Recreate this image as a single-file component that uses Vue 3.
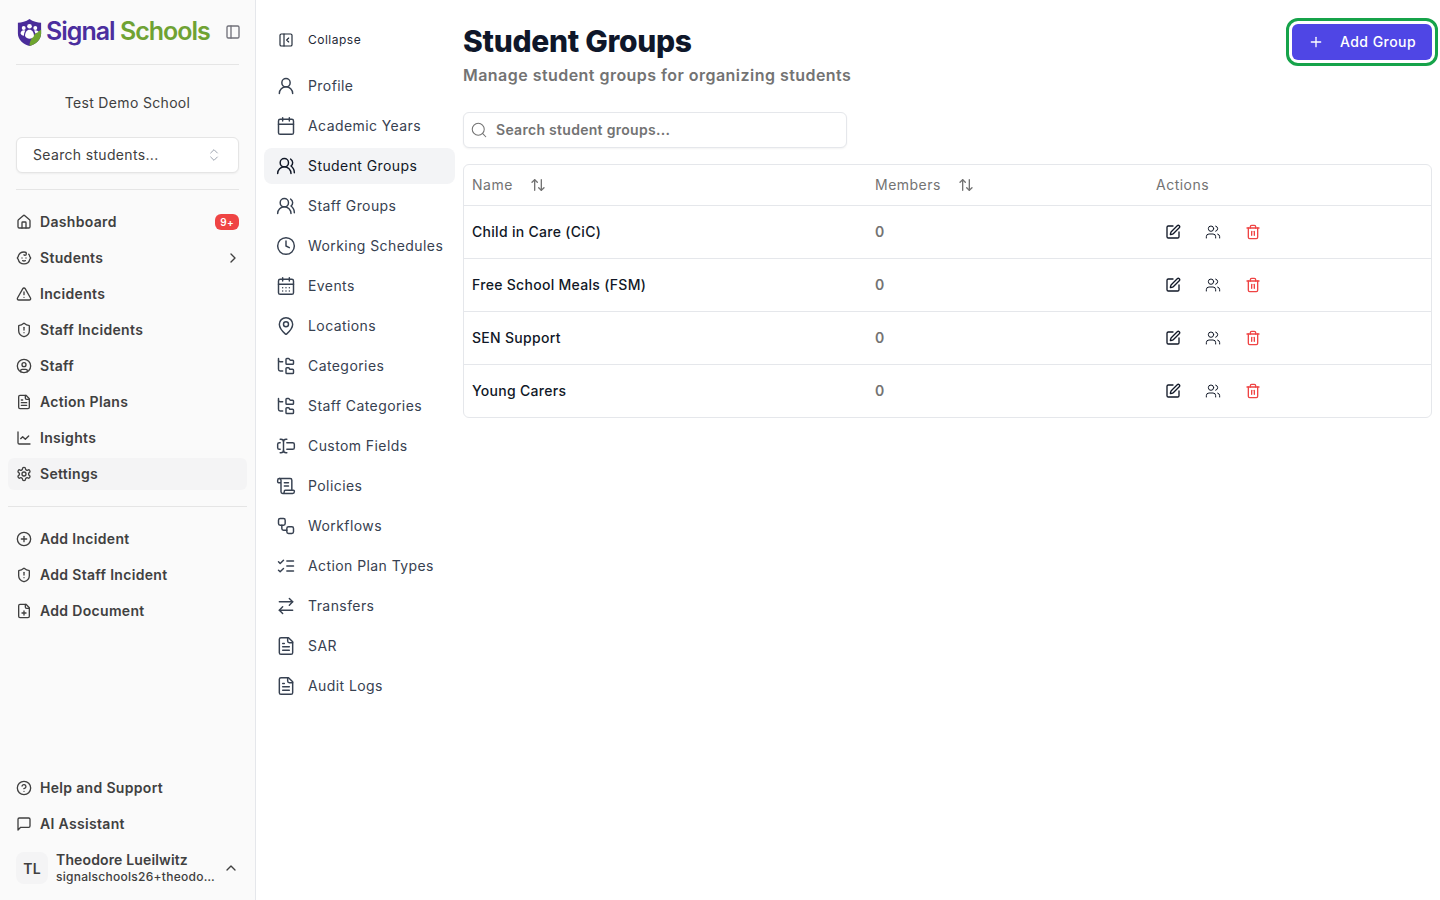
<script setup>
const p = (...ds) => ds.map(d => `<path d="${d}"/>`).join('')
const c = (cx, cy, r) => `<circle cx="${cx}" cy="${cy}" r="${r}"/>`
const r = (x, y, w, h, rx) => `<rect x="${x}" y="${y}" width="${w}" height="${h}" rx="${rx}"/>`

const shield = 'M20 13c0 5-3.5 7.5-7.66 8.95a1 1 0 0 1-.67-.01C7.5 20.5 4 18 4 13V6a1 1 0 0 1 1-1c2 0 4.5-1.2 6.24-2.72a1.17 1.17 0 0 1 1.52 0C14.51 3.81 17 5 19 5a1 1 0 0 1 1 1z'
const file = 'M15 2H6a2 2 0 0 0-2 2v16a2 2 0 0 0 2 2h12a2 2 0 0 0 2-2V7Z'
const fold = 'M14 2v4a2 2 0 0 0 2 2h4'

const icons = {
  home: p('M15 21v-8a1 1 0 0 0-1-1h-4a1 1 0 0 0-1 1v8', 'M3 10a2 2 0 0 1 .709-1.528l7-5.999a2 2 0 0 1 2.582 0l7 5.999A2 2 0 0 1 21 10v9a2 2 0 0 1-2 2H5a2 2 0 0 1-2-2z'),
  baby: p('M9 12h.01', 'M15 12h.01', 'M10 16c.5.3 1.2.5 2 .5s1.5-.2 2-.5', 'M19 6.3a9 9 0 0 1 1.8 3.9 2 2 0 0 1 0 3.6 9 9 0 0 1-17.6 0 2 2 0 0 1 0-3.6A9 9 0 0 1 12 3c2 0 3.5 1.1 3.5 2.5s-.9 2.5-2 2.5c-.8 0-1.5-.4-1.5-1'),
  alert: p('m21.73 18-8-14a2 2 0 0 0-3.48 0l-8 14A2 2 0 0 0 4 21h16a2 2 0 0 0 1.73-3', 'M12 9v4', 'M12 17h.01'),
  shield: p(shield, 'M12 8v4', 'M12 16h.01'),
  userCircle: c(12, 12, 10) + c(12, 10, 3) + p('M7 20.662V19a2 2 0 0 1 2-2h6a2 2 0 0 1 2 2v1.662'),
  file: p(file, fold, 'M10 9H8', 'M16 13H8', 'M16 17H8'),
  chart: p('M3 3v16a2 2 0 0 0 2 2h16', 'm19 9-5 5-4-4-3 3'),
  settings: p('M12.22 2h-.44a2 2 0 0 0-2 2v.18a2 2 0 0 1-1 1.73l-.43.25a2 2 0 0 1-2 0l-.15-.08a2 2 0 0 0-2.73.73l-.22.38a2 2 0 0 0 .73 2.73l.15.1a2 2 0 0 1 1 1.72v.51a2 2 0 0 1-1 1.74l-.15.09a2 2 0 0 0-.73 2.73l.22.38a2 2 0 0 0 2.73.73l.15-.08a2 2 0 0 1 2 0l.43.25a2 2 0 0 1 1 1.73V20a2 2 0 0 0 2 2h.44a2 2 0 0 0 2-2v-.18a2 2 0 0 1 1-1.73l.43-.25a2 2 0 0 1 2 0l.15.08a2 2 0 0 0 2.73-.73l.22-.39a2 2 0 0 0-.73-2.73l-.15-.08a2 2 0 0 1-1-1.74v-.5a2 2 0 0 1 1-1.74l.15-.09a2 2 0 0 0 .73-2.73l-.22-.38a2 2 0 0 0-2.73-.73l-.15.08a2 2 0 0 1-2 0l-.43-.25a2 2 0 0 1-1-1.73V4a2 2 0 0 0-2-2z') + c(12, 12, 3),
  circlePlus: c(12, 12, 10) + p('M8 12h8', 'M12 8v8'),
  filePlus: p(file, fold, 'M9 15h6', 'M12 18v-6'),
  help: c(12, 12, 10) + p('M9.09 9a3 3 0 0 1 5.83 1c0 2-3 3-3 3', 'M12 17h.01'),
  message: p('M21 15a2 2 0 0 1-2 2H7l-4 4V5a2 2 0 0 1 2-2h14a2 2 0 0 1 2 2z'),
  panel: r(3, 3, 18, 18, 2) + p('M9 3v18'),
  panelClose: r(3, 3, 18, 18, 2) + p('M9 3v18', 'm16 15-3-3 3-3'),
  updown: p('m7 15 5 5 5-5', 'm7 9 5-5 5 5'),
  chevronRight: p('m9 18 6-6-6-6'),
  chevronUp: p('m18 15-6-6-6 6'),
  user: c(12, 8, 5) + p('M20 21a8 8 0 0 0-16 0'),
  calendar: p('M8 2v4', 'M16 2v4', 'M3 10h18') + r(3, 4, 18, 18, 2),
  usersRound: p('M18 21a8 8 0 0 0-16 0', 'M22 20c0-3.37-2-6.5-4-8a5 5 0 0 0-.45-8.3') + c(10, 8, 5),
  clock: c(12, 12, 10) + p('M12 6v6l4 2'),
  calendarDays: p('M8 2v4', 'M16 2v4', 'M3 10h18', 'M8 14h.01', 'M12 14h.01', 'M16 14h.01', 'M8 18h.01', 'M12 18h.01', 'M16 18h.01') + r(3, 4, 18, 18, 2),
  pin: p('M20 10c0 4.993-5.539 10.193-7.399 11.799a1 1 0 0 1-1.202 0C9.539 20.193 4 14.993 4 10a8 8 0 0 1 16 0') + c(12, 10, 3),
  tree: p('M20 10a1 1 0 0 0 1-1V6a1 1 0 0 0-1-1h-2.5a1 1 0 0 1-.8-.4l-.9-1.2A1 1 0 0 0 15 3h-2a1 1 0 0 0-1 1v5a1 1 0 0 0 1 1Z', 'M20 21a1 1 0 0 0 1-1v-3a1 1 0 0 0-1-1h-2.9a1 1 0 0 1-.88-.55l-.42-.85a1 1 0 0 0-.92-.6H13a1 1 0 0 0-1 1v5a1 1 0 0 0 1 1Z', 'M3 5a2 2 0 0 0 2 2h3', 'M3 3v13a2 2 0 0 0 2 2h3'),
  cursorInput: p('M5 4h1a3 3 0 0 1 3 3 3 3 0 0 1 3-3h1', 'M13 20h-1a3 3 0 0 1-3-3 3 3 0 0 1-3 3H5', 'M5 16H4a2 2 0 0 1-2-2v-4a2 2 0 0 1 2-2h1', 'M13 8h7a2 2 0 0 1 2 2v4a2 2 0 0 1-2 2h-7', 'M9 7v10'),
  scroll: p('M15 12h-5', 'M15 8h-5', 'M19 17V5a2 2 0 0 0-2-2H4', 'M8 21h12a2 2 0 0 0 2-2v-1a1 1 0 0 0-1-1H11a1 1 0 0 0-1 1v1a2 2 0 1 1-4 0V5a2 2 0 1 0-4 0v2a1 1 0 0 0 1 1h3'),
  workflow: r(3, 3, 8, 8, 2) + r(13, 13, 8, 8, 2) + p('M7 11v4a2 2 0 0 0 2 2h4'),
  checks: p('m3 17 2 2 4-4', 'm3 7 2 2 4-4', 'M13 6h8', 'M13 12h8', 'M13 18h8'),
  transfer: p('m16 3 4 4-4 4', 'M20 7H4', 'm8 21-4-4 4-4', 'M4 17h16'),
  sort: p('m21 16-4 4-4-4', 'M17 20V4', 'm3 8 4-4 4 4', 'M7 4v16'),
  search: p('m21 21-4.34-4.34') + c(11, 11, 8),
  edit: p('M12 3H5a2 2 0 0 0-2 2v14a2 2 0 0 0 2 2h14a2 2 0 0 0 2-2v-7', 'M18.375 2.625a1 1 0 0 1 3 3l-9 9a2 2 0 0 1-.88.51l-2.87.84a.5.5 0 0 1-.62-.62l.84-2.87a2 2 0 0 1 .51-.88z'),
  users: p('M16 21v-2a4 4 0 0 0-4-4H6a4 4 0 0 0-4 4v2', 'M16 3.128a4 4 0 0 1 0 7.744', 'M22 21v-2a4 4 0 0 0-3-3.87') + c(9, 7, 4),
  trash: p('M3 6h18', 'M19 6v14c0 1-1 2-2 2H7c-1 0-2-1-2-2V6', 'M8 6V4c0-1 1-2 2-2h4c1 0 2 1 2 2v2', 'M10 11v6', 'M14 11v6'),
  plus: p('M5 12h14', 'M12 5v14'),
}

const mainNav = [
  { label: 'Dashboard', icon: 'home', badge: '9+' },
  { label: 'Students', icon: 'baby', arrow: true },
  { label: 'Incidents', icon: 'alert' },
  { label: 'Staff Incidents', icon: 'shield' },
  { label: 'Staff', icon: 'userCircle' },
  { label: 'Action Plans', icon: 'file' },
  { label: 'Insights', icon: 'chart' },
  { label: 'Settings', icon: 'settings', active: true },
]
const quickNav = [
  { label: 'Add Incident', icon: 'circlePlus' },
  { label: 'Add Staff Incident', icon: 'shield' },
  { label: 'Add Document', icon: 'filePlus' },
]
const footNav = [
  { label: 'Help and Support', icon: 'help' },
  { label: 'AI Assistant', icon: 'message' },
]
const settingsNav = [
  { label: 'Profile', icon: 'user' },
  { label: 'Academic Years', icon: 'calendar' },
  { label: 'Student Groups', icon: 'usersRound', active: true },
  { label: 'Staff Groups', icon: 'usersRound' },
  { label: 'Working Schedules', icon: 'clock' },
  { label: 'Events', icon: 'calendarDays' },
  { label: 'Locations', icon: 'pin' },
  { label: 'Categories', icon: 'tree' },
  { label: 'Staff Categories', icon: 'tree' },
  { label: 'Custom Fields', icon: 'cursorInput' },
  { label: 'Policies', icon: 'scroll' },
  { label: 'Workflows', icon: 'workflow' },
  { label: 'Action Plan Types', icon: 'checks' },
  { label: 'Transfers', icon: 'transfer' },
  { label: 'SAR', icon: 'file' },
  { label: 'Audit Logs', icon: 'file' },
]
const groups = [
  { name: 'Child in Care (CiC)', members: 0 },
  { name: 'Free School Meals (FSM)', members: 0 },
  { name: 'SEN Support', members: 0 },
  { name: 'Young Carers', members: 0 },
]
</script>

<template>
  <div class="app">
    <aside class="sidebar">
      <div class="brand">
        <svg class="logo" viewBox="0 0 28 32">
          <path d="M14 1 C18 4 23 5 27 5 L27 17 C27 24 21 29 14 31 C7 29 1 24 1 17 L1 5 C5 5 10 4 14 1Z" fill="#4a2c9a" />
          <path d="M27 13 L27 17 C27 24 21 29 14 31 C14 24 19 17 27 13Z" fill="#6fa52f" />
          <circle cx="14" cy="9" r="2.6" fill="#fff" />
          <circle cx="7.5" cy="11" r="2.2" fill="#fff" />
          <circle cx="20.5" cy="11" r="2.2" fill="#fff" />
          <path d="M9 20c0-4 2-7 5-7s5 3 5 7c-1 2-3 3-5 3s-4-1-5-3Z" fill="#fff" />
          <path d="M4 17c0-2 1.500-3.500 3.500-3.500 .7 0 1.300 .2 1.800 .5-1 1.500-1.500 3.500-1.500 5.500-1.500 0-3-.8-3.800-2.500Z" fill="#fff" />
          <path d="M24 15.500c-.5-1.200-1.500-2-3-2-.7 0-1.300 .2-1.800 .5 .7 1 1.100 2 1.300 3.200Z" fill="#fff" />
        </svg>
        <span class="brand-name"><span class="purple">Signal</span> <span class="green">Schools</span></span>
        <svg class="icon panel-btn" viewBox="0 0 24 24" v-html="icons.panel"></svg>
      </div>
      <div class="school">Test Demo School</div>
      <button class="student-search">
        <span class="lift">Search students...</span>
        <svg class="icon updown" viewBox="0 0 24 24" v-html="icons.updown"></svg>
      </button>
      <div class="rule inset"></div>

      <nav class="nav">
        <a v-for="item in mainNav" :key="item.label" class="nav-item" :class="{ active: item.active }">
          <svg class="icon" viewBox="0 0 24 24" v-html="icons[item.icon]"></svg>
          <span class="nav-label lift">{{ item.label }}</span>
          <span v-if="item.badge" class="badge">{{ item.badge }}</span>
          <svg v-if="item.arrow" class="icon arrow" viewBox="0 0 24 24" v-html="icons.chevronRight"></svg>
        </a>
      </nav>
      <div class="rule"></div>
      <nav class="nav quick">
        <a v-for="item in quickNav" :key="item.label" class="nav-item">
          <svg class="icon" viewBox="0 0 24 24" v-html="icons[item.icon]"></svg>
          <span class="nav-label lift">{{ item.label }}</span>
        </a>
      </nav>

      <nav class="nav foot">
        <a v-for="item in footNav" :key="item.label" class="nav-item">
          <svg class="icon" viewBox="0 0 24 24" v-html="icons[item.icon]"></svg>
          <span class="nav-label lift">{{ item.label }}</span>
        </a>
      </nav>
      <div class="user">
        <div class="avatar">TL</div>
        <div class="user-text">
          <div class="user-name">Theodore Lueilwitz</div>
          <div class="user-mail">signalschools26+theodo…</div>
        </div>
        <svg class="icon user-chevron" viewBox="0 0 24 24" v-html="icons.chevronUp"></svg>
      </div>
    </aside>

    <div class="subnav">
      <a class="collapse">
        <svg class="icon" viewBox="0 0 24 24" v-html="icons.panelClose"></svg>
        <span class="lift">Collapse</span>
      </a>
      <a v-for="item in settingsNav" :key="item.label" class="sub-item" :class="{ active: item.active }">
        <svg class="icon" viewBox="0 0 24 24" v-html="icons[item.icon]"></svg>
        <span class="lift">{{ item.label }}</span>
      </a>
    </div>

    <main class="main">
      <header class="head">
        <div>
          <h1>Student Groups</h1>
          <p>Manage student groups for organizing students</p>
        </div>
        <button class="add-btn">
          <svg class="icon" viewBox="0 0 24 24" v-html="icons.plus"></svg>
          <span class="lift">Add Group</span>
        </button>
      </header>

      <div class="search">
        <svg class="icon" viewBox="0 0 24 24" v-html="icons.search"></svg>
        <span class="lift">Search student groups...</span>
      </div>

      <div class="table">
        <div class="row th">
          <div class="cell"><span class="lift">Name</span> <svg class="icon sort" viewBox="0 0 24 24" v-html="icons.sort"></svg></div>
          <div class="cell"><span class="lift">Members</span> <svg class="icon sort" viewBox="0 0 24 24" v-html="icons.sort"></svg></div>
          <div class="cell"><span class="lift">Actions</span></div>
        </div>
        <div v-for="g in groups" :key="g.name" class="row">
          <div class="cell name"><span class="lift">{{ g.name }}</span></div>
          <div class="cell count"><span class="lift">{{ g.members }}</span></div>
          <div class="cell actions">
            <svg class="icon" viewBox="0 0 24 24" v-html="icons.edit"></svg>
            <svg class="icon thin" viewBox="0 0 24 24" v-html="icons.users"></svg>
            <svg class="icon danger" viewBox="0 0 24 24" v-html="icons.trash"></svg>
          </div>
        </div>
      </div>
    </main>
  </div>
</template>

<style>
html, body { margin: 0; background: #fff; }
</style>

<style scoped>
.app {
  display: flex;
  height: 900px;
  overflow: hidden;
  font-family: Inter, "Noto Sans", sans-serif;
  font-size: 14px;
  color: #111827;
  letter-spacing: 0.01em;
}
.icon {
  width: 16px;
  height: 16px;
  flex: none;
  fill: none;
  stroke: currentColor;
  stroke-width: 2;
  stroke-linecap: round;
  stroke-linejoin: round;
}
/* Inter sits a little lower than the box centre in these rows */
.lift { margin-top: -2px; }

/* main sidebar */
.sidebar {
  width: 256px;
  flex: none;
  box-sizing: border-box;
  height: 900px;
  padding: 16px 8px 8px;
  background: #fafafa;
  border-right: 1px solid #e5e7eb;
  display: flex;
  flex-direction: column;
}
.brand {
  display: flex;
  align-items: center;
  height: 32px;
  margin: 0 8px;
  padding-bottom: 16px;
  border-bottom: 1px solid #e5e5e5;
}
.logo { width: 25px; height: 29px; flex: none; margin-left: 1px; }
.brand-name {
  margin: -2px 0 0 4px;
  font-size: 25px;
  font-weight: 600;
  letter-spacing: -0.04em;
  white-space: nowrap;
}
.purple { color: #4b2e9e; }
.green { color: #6fa233; }
.panel-btn { margin-left: auto; margin-right: -2px; color: #71717a; }
.school {
  margin-top: 28px;
  text-align: center;
  color: #404040;
  line-height: 20px;
  letter-spacing: 0.33px;
}
.student-search {
  margin: 24px 8px 0;
  height: 36px;
  padding: 0 16px;
  display: flex;
  align-items: center;
  justify-content: space-between;
  background: #fff;
  border: 1px solid #e5e5e5;
  border-radius: 6px;
  box-shadow: 0 1px 2px rgba(0, 0, 0, 0.05);
  font: inherit;
  letter-spacing: 0.33px;
  color: #404040;
}
.updown { color: #9ca3af; stroke-width: 1.5; }
.rule { height: 1px; background: #e5e5e5; margin: 16px 0; flex: none; }
.rule.inset { margin: 16px 8px; }
.nav { display: flex; flex-direction: column; gap: 4px; }
.nav-item {
  display: flex;
  align-items: center;
  gap: 8px;
  height: 32px;
  padding: 0 8px;
  border-radius: 6px;
  color: #404040;
  font-weight: 600;
  letter-spacing: 0.32px;
}
.nav-item.active { background: #f4f4f5; }
.nav-label { white-space: nowrap; }
.badge {
  margin-left: auto;
  background: #ef4444;
  color: #fff;
  font-size: 10px;
  font-weight: 600;
  line-height: 16px;
  padding: 0 5px;
  border-radius: 6px;
}
.arrow { margin-left: auto; margin-right: -2px; color: #404040; }
.quick { margin-bottom: auto; }
.user {
  display: flex;
  align-items: center;
  gap: 8px;
  height: 48px;
  margin-top: 4px;
  padding: 0 8px;
}
.avatar {
  width: 32px;
  height: 32px;
  flex: none;
  border-radius: 8px;
  background: #f4f4f5;
  color: #404040;
  display: flex;
  align-items: center;
  justify-content: center;
  font-weight: 600;
}
.user-text { flex: 1; min-width: 0; }
.user-name { color: #404040; font-weight: 600; line-height: 17px; margin-bottom: 1px; white-space: nowrap; }
.user-mail {
  font-size: 12px;
  font-weight: 500;
  line-height: 16px;
  letter-spacing: 0.27px;
  color: #404040;
  white-space: nowrap;
}
.user-chevron { color: #404040; }

/* settings column */
.subnav {
  width: 191px;
  flex: none;
  margin-left: 8px;
  padding-top: 22px;
  display: flex;
  flex-direction: column;
  gap: 4px;
}
.collapse, .sub-item {
  display: flex;
  align-items: center;
  gap: 12px;
  height: 36px;
  flex: none;
  padding: 0 12px;
  border-radius: 8px;
  color: #374151;
  white-space: nowrap;
  letter-spacing: 0.42px;
}
.collapse { font-size: 12px; color: #1f2937; margin-bottom: 6px; letter-spacing: 0.5px; }
.subnav .icon { width: 20px; height: 20px; stroke-width: 1.75; }
.collapse .icon { width: 16px; height: 16px; margin: 0 2px; }
.sub-item.active { background: #f3f4f6; color: #111827; }

/* content */
.main { flex: 1; min-width: 0; padding: 0 8px; }
.head {
  display: flex;
  justify-content: space-between;
  align-items: flex-start;
  padding-top: 23px;
}
h1 {
  margin: 0;
  font-size: 30px;
  font-weight: 800;
  line-height: 36px;
  letter-spacing: -0.3px;
  color: #0f172a;
}
.head p {
  margin: 4px 0 0;
  font-size: 16px;
  font-weight: 600;
  line-height: 24px;
  letter-spacing: 0.46px;
  color: #737373;
}
.add-btn {
  width: 140px;
  height: 36px;
  margin-top: 1px;
  padding: 0 16px;
  display: flex;
  align-items: center;
  gap: 16px;
  background: #4f46e5;
  color: #fff;
  border: 0;
  border-radius: 6px;
  outline: 3px solid #16a34a;
  outline-offset: 3px;
  font: inherit;
  font-weight: 500;
  letter-spacing: 0.45px;
  white-space: nowrap;
}
.search {
  margin-top: 25px;
  width: 384px;
  height: 36px;
  box-sizing: border-box;
  padding: 0 8px;
  display: flex;
  align-items: center;
  gap: 8px;
  background: #fff;
  border: 1px solid #e5e7eb;
  border-radius: 6px;
  box-shadow: 0 1px 2px rgba(0, 0, 0, 0.05);
  color: #737373;
  font-weight: 600;
  letter-spacing: 0.29px;
}
.search .icon { width: 18px; height: 18px; margin-left: -2px; stroke-width: 1.4; }
.table {
  margin-top: 16px;
  border: 1px solid #e5e7eb;
  border-radius: 6px;
}
.row {
  display: grid;
  grid-template-columns: 403px 281px 1fr;
  height: 53px;
  box-sizing: border-box;
  border-top: 1px solid #e5e7eb;
}
.row.th { height: 40px; border-top: 0; color: #737373; letter-spacing: 0.49px; }
.cell { display: flex; align-items: center; padding: 0 8px; }
.sort { margin-left: 17px; }
.name { font-weight: 500; color: #111827; letter-spacing: 0.3px; }
.count { font-weight: 600; color: #737373; }
.actions { gap: 24px; padding-left: 17px; }
.thin { stroke-width: 1.5; }
.danger { color: #ef4444; }
</style>
